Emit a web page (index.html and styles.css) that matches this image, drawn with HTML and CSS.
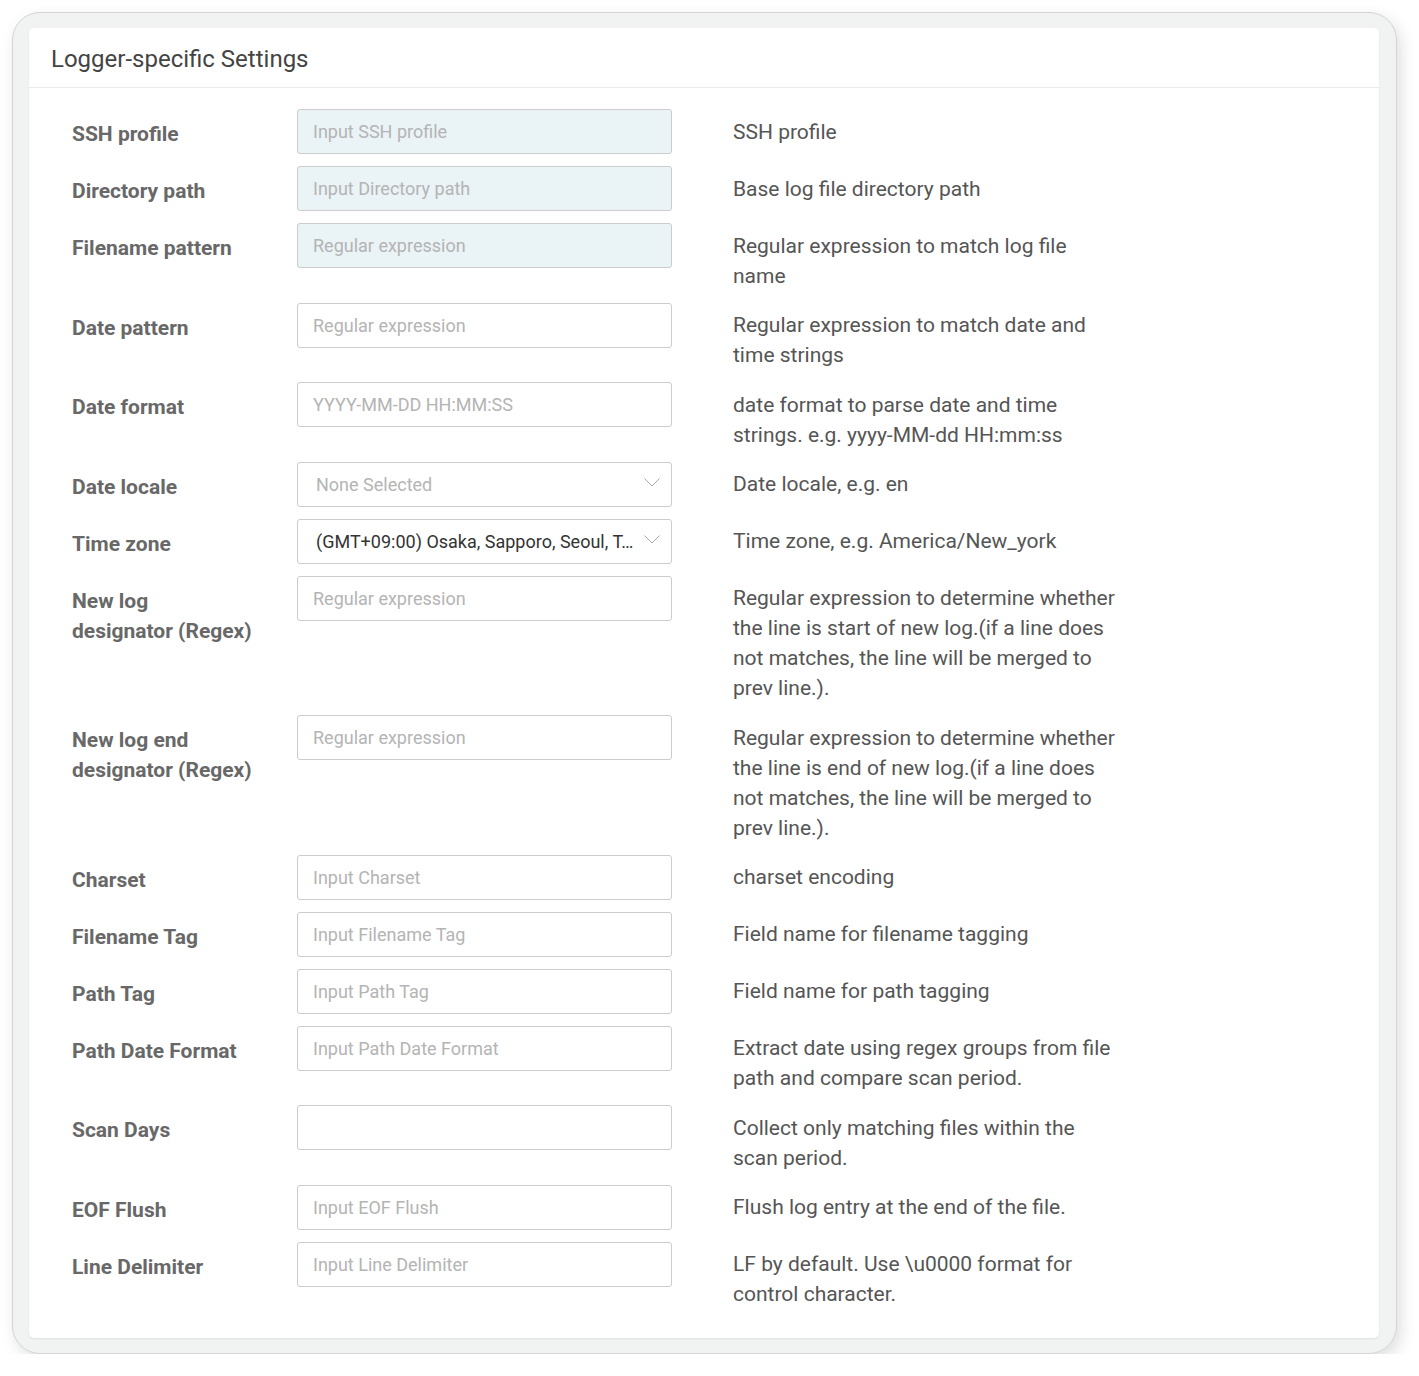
FILE: index.html
```html
<!DOCTYPE html>
<html lang="en">
<head>
<meta charset="utf-8">
<title>Logger-specific Settings</title>
<link rel="stylesheet" href="styles.css">
</head>
<body>
<div class="frame">
  <div class="card">
    <div class="card-header">Logger-specific Settings</div>
    <div class="card-body">
      <div class="row">
        <div class="label">SSH profile</div>
        <div class="field"><input class="input readonly" type="text" placeholder="Input SSH profile" readonly></div>
        <div class="desc">SSH profile</div>
      </div>
      <div class="row">
        <div class="label">Directory path</div>
        <div class="field"><input class="input readonly" type="text" placeholder="Input Directory path" readonly></div>
        <div class="desc">Base log file directory path</div>
      </div>
      <div class="row">
        <div class="label">Filename pattern</div>
        <div class="field"><input class="input readonly" type="text" placeholder="Regular expression" readonly></div>
        <div class="desc">Regular expression to match log file name</div>
      </div>
      <div class="row">
        <div class="label">Date pattern</div>
        <div class="field"><input class="input" type="text" placeholder="Regular expression"></div>
        <div class="desc">Regular expression to match date and time strings</div>
      </div>
      <div class="row">
        <div class="label">Date format</div>
        <div class="field"><input class="input" type="text" placeholder="YYYY-MM-DD HH:MM:SS"></div>
        <div class="desc">date format to parse date and time strings. e.g. yyyy-MM-dd HH:mm:ss</div>
      </div>
      <div class="row">
        <div class="label">Date locale</div>
        <div class="field">
          <div class="select"><span class="select-text placeholder">None Selected</span>
            <svg class="chevron" width="16" height="9" viewBox="0 0 16 9"><polyline points="0.5,0.5 8,8 15.5,0.5" fill="none" stroke="#a8a8a8" stroke-width="1"/></svg>
          </div>
        </div>
        <div class="desc">Date locale, e.g. en</div>
      </div>
      <div class="row">
        <div class="label">Time zone</div>
        <div class="field">
          <div class="select"><span class="select-text">(GMT+09:00) Osaka, Sapporo, Seoul, T…</span>
            <svg class="chevron" width="16" height="9" viewBox="0 0 16 9"><polyline points="0.5,0.5 8,8 15.5,0.5" fill="none" stroke="#a8a8a8" stroke-width="1"/></svg>
          </div>
        </div>
        <div class="desc">Time zone, e.g. America/New_york</div>
      </div>
      <div class="row">
        <div class="label">New log<br>designator (Regex)</div>
        <div class="field"><input class="input" type="text" placeholder="Regular expression"></div>
        <div class="desc">Regular expression to determine whether the line is start of new log.(if a line does not matches, the line will be merged to prev line.).</div>
      </div>
      <div class="row">
        <div class="label">New log end<br>designator (Regex)</div>
        <div class="field"><input class="input" type="text" placeholder="Regular expression"></div>
        <div class="desc">Regular expression to determine whether the line is end of new log.(if a line does not matches, the line will be merged to prev line.).</div>
      </div>
      <div class="row">
        <div class="label">Charset</div>
        <div class="field"><input class="input" type="text" placeholder="Input Charset"></div>
        <div class="desc">charset encoding</div>
      </div>
      <div class="row">
        <div class="label">Filename Tag</div>
        <div class="field"><input class="input" type="text" placeholder="Input Filename Tag"></div>
        <div class="desc">Field name for filename tagging</div>
      </div>
      <div class="row">
        <div class="label">Path Tag</div>
        <div class="field"><input class="input" type="text" placeholder="Input Path Tag"></div>
        <div class="desc">Field name for path tagging</div>
      </div>
      <div class="row">
        <div class="label">Path Date Format</div>
        <div class="field"><input class="input" type="text" placeholder="Input Path Date Format"></div>
        <div class="desc">Extract date using regex groups from file path and compare scan period.</div>
      </div>
      <div class="row">
        <div class="label">Scan Days</div>
        <div class="field"><input class="input" type="text"></div>
        <div class="desc">Collect only matching files within the scan period.</div>
      </div>
      <div class="row">
        <div class="label">EOF Flush</div>
        <div class="field"><input class="input" type="text" placeholder="Input EOF Flush"></div>
        <div class="desc">Flush log entry at the end of the file.</div>
      </div>
      <div class="row">
        <div class="label">Line Delimiter</div>
        <div class="field"><input class="input" type="text" placeholder="Input Line Delimiter"></div>
        <div class="desc">LF by default. Use \u0000 format for control character.</div>
      </div>
    </div>
  </div>
</div>
</body>
</html>
```

FILE: styles.css
```css
* { box-sizing: border-box; }

html, body {
  margin: 0;
  padding: 0;
  background: #ffffff;
}

body {
  font-family: Roboto, "Liberation Sans", Arial, sans-serif;
  padding: 12px 0 0 12px;
}

.frame {
  width: 1385px;
  background: #f1f2f2;
  border: 1px solid #d3d5d5;
  border-radius: 28px;
  padding: 15px 17px 15px 16px;
  box-shadow: 4px 6px 16px rgba(0, 0, 0, 0.13);
}

.card {
  width: 1350px;
  background: #ffffff;
  border-radius: 5px;
  box-shadow: 0 1px 2px rgba(0, 0, 0, 0.08);
}

.card-header {
  height: 60px;
  line-height: 62px;
  padding: 0 22px;
  font-size: 24px;
  color: #444444;
  border-bottom: 1px solid #e9ebeb;
}

.card-body {
  padding: 21px 20px 17px 43px;
}

.row {
  display: flex;
  align-items: flex-start;
  margin-bottom: 12px;
}

.label {
  width: 225px;
  flex: none;
  padding-top: 10px;
  font-size: 21px;
  line-height: 30px;
  font-weight: 700;
  color: #686868;
}

.field {
  width: 375px;
  flex: none;
}

.input {
  display: block;
  width: 100%;
  height: 45px;
  margin: 0;
  padding: 0 15px;
  font-family: Roboto, "Liberation Sans", Arial, sans-serif;
  font-size: 18px;
  color: #333333;
  background: #ffffff;
  border: 1px solid #cccccc;
  border-radius: 3px;
  outline: none;
}

.input::placeholder {
  color: #b4b4b4;
  opacity: 1;
}

.input.readonly {
  background: #eaf3f6;
}

.select {
  display: flex;
  align-items: center;
  justify-content: space-between;
  height: 45px;
  padding: 0 11px 0 18px;
  border: 1px solid #cccccc;
  border-radius: 3px;
  background: #ffffff;
}

.select-text {
  font-size: 18px;
  color: #333333;
  white-space: nowrap;
}

.select-text.placeholder {
  color: #b4b4b4;
}

.chevron {
  flex: none;
  margin-top: -4px;
}

.desc {
  width: 384px;
  flex: none;
  margin-left: 61px;
  padding-top: 7.5px;
  font-size: 21px;
  line-height: 30px;
  color: #555555;
}
```
